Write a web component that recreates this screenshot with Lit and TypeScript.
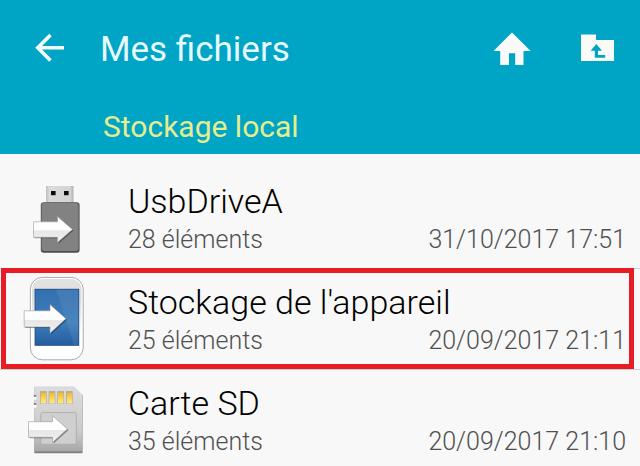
import { LitElement, html, css, svg } from "lit";
import { customElement } from "lit/decorators.js";
import { classMap } from "lit/directives/class-map.js";

const arrow = (d: string) => svg`
  <path d=${d} transform="translate(1 1)" fill="#000" opacity="0.4"></path>
  <path d=${d} fill="url(#arrow)" stroke="#9a9a9a" stroke-width="0.6"></path>`;

const arrowFill = svg`
  <linearGradient id="arrow" x1="0" y1="0" x2="0" y2="1">
    <stop offset="0" stop-color="#fff"></stop>
    <stop offset="0.52" stop-color="#fdfdfd"></stop>
    <stop offset="0.56" stop-color="#e6e6e6"></stop>
    <stop offset="1" stop-color="#f4f4f4"></stop>
  </linearGradient>`;

const usbIcon = html`
  <svg class="icon" viewBox="0 0 100 100" aria-hidden="true">
    <defs>
      ${arrowFill}
      <linearGradient id="plug"><stop offset="0" stop-color="#bdbdbd"></stop><stop offset="0.12" stop-color="#dadada"></stop><stop offset="0.88" stop-color="#d4d4d4"></stop><stop offset="1" stop-color="#b0b0b0"></stop></linearGradient>
    </defs>
    <rect x="46" y="18" width="27.5" height="18" fill="url(#plug)"></rect>
    <rect x="51" y="23" width="4.6" height="4.2" fill="#0c0c0c"></rect>
    <rect x="64" y="23" width="4.6" height="4.2" fill="#0c0c0c"></rect>
    <rect x="40.8" y="34.3" width="38.8" height="50.4" rx="3" fill="#4e4e4e"></rect>
    <rect x="41.6" y="35" width="37" height="48" rx="2.4" fill="#828282"></rect>
    ${arrow("M33.5 53.8H57.5V48.5L72.5 61.5L57.5 74.5V69.3H33.5Z")}
  </svg>`;

const phoneIcon = html`
  <svg class="icon" viewBox="0 0 100 100" aria-hidden="true">
    <defs>
      ${arrowFill}
      <linearGradient id="screen" x1="0" y1="0" x2="0" y2="1"><stop offset="0" stop-color="#3470b0"></stop><stop offset="0.6" stop-color="#3d7cba"></stop><stop offset="1" stop-color="#255d9f"></stop></linearGradient>
      <linearGradient id="shell" x1="0" y1="0" x2="0" y2="1"><stop offset="0" stop-color="#e2e2e2"></stop><stop offset="0.25" stop-color="#dedede"></stop><stop offset="0.7" stop-color="#fff"></stop></linearGradient>
    </defs>
    <rect x="30.4" y="8.4" width="52.8" height="82.4" rx="12" fill="#fff" stroke="#a2a2a2" stroke-width="0.9"></rect>
    <rect x="32" y="10" width="49.6" height="79" rx="10.5" fill="url(#shell)"></rect>
    <rect x="34.6" y="19.8" width="44.6" height="57" fill="#1e4c86"></rect>
    <rect x="35.4" y="20.6" width="43" height="55.4" fill="url(#screen)"></rect>
    <path d="M56 20.6H78.4V76H74Z" fill="#fff" opacity="0.07"></path>
    ${arrow("M24.2 41.8H50V35.5L66 49.7L50 64.3V58H24.2Z")}
  </svg>`;

const cardIcon = html`
  <svg class="icon" viewBox="0 0 100 100" aria-hidden="true">
    <defs>
      ${arrowFill}
      <linearGradient id="card" x1="0" y1="0" x2="0" y2="1"><stop offset="0" stop-color="#dcdcdc"></stop><stop offset="0.7" stop-color="#cacaca"></stop><stop offset="1" stop-color="#a6a6a6"></stop></linearGradient>
      <linearGradient id="gold" x1="0" y1="0" x2="0" y2="1"><stop offset="0" stop-color="#e9b93c"></stop><stop offset="0.5" stop-color="#fbd34f"></stop><stop offset="1" stop-color="#ffe896"></stop></linearGradient>
    </defs>
    <path d="M34.4 17.5H74.5L82.5 25.5V83.2H34.4Z" fill="#7d7d7d"></path>
    <path d="M34.2 16.2H74L82.2 24.6V81.6H34.2Z" fill="url(#card)"></path>
    <rect x="33.8" y="25.3" width="2.4" height="1.4" fill="#555"></rect>
    <rect x="33.8" y="33.4" width="2.4" height="1.4" fill="#555"></rect>
    <rect x="33.6" y="26.7" width="2.8" height="2.8" fill="#fff"></rect>
    <rect x="33.6" y="34.8" width="2.8" height="2.8" fill="#fff"></rect>
    ${[40, 48.7, 57.4, 66].map(
      (x) => svg`
        <rect x=${x} y="21.2" width="6.6" height="12.8" fill="#a3a3a3"></rect>
        <rect x=${x + 0.6} y="22.4" width="5.6" height="11.2" fill="url(#gold)"></rect>`
    )}
    <rect x="40.8" y="42.5" width="35.6" height="31.8" rx="2" fill="#cfcfcf" stroke="#a8a8a8" stroke-width="0.8"></rect>
    ${arrow("M28.5 51.7H52.5V45.6L67.5 59L52.5 72.5V67.3H28.5Z")}
  </svg>`;

const entries = [
  { name: "UsbDriveA", count: "28 éléments", date: "31/10/2017 17:51", icon: usbIcon, marked: false },
  { name: "Stockage de l'appareil", count: "25 éléments", date: "20/09/2017 21:11", icon: phoneIcon, marked: true },
  { name: "Carte SD", count: "35 éléments", date: "20/09/2017 21:10", icon: cardIcon, marked: false },
];

@customElement("app-root")
export class AppRoot extends LitElement {
  static styles = css`
    :host {
      display: block;
      min-height: 100vh;
      background: #f8f8f8;
      font-family: Roboto, "Liberation Sans", sans-serif;
      color: #000;
    }
    button {
      border: 0;
      padding: 0;
      background: none;
      font: inherit;
      color: inherit;
      cursor: pointer;
    }
    header {
      background: #00a4c5;
    }
    .bar {
      display: flex;
      align-items: center;
      height: 98px;
      padding: 0 20px 0 30px;
    }
    .tool {
      display: block;
      width: 40px;
      height: 40px;
    }
    .tool svg {
      display: block;
      width: 40px;
      height: 40px;
    }
    .actions {
      display: flex;
      gap: 46px;
      margin-left: auto;
    }
    h1 {
      margin: 0 0 0 30px;
      padding-top: 2px;
      font-size: 35px;
      line-height: 42px;
      font-weight: 400;
      color: #e6fbff;
    }
    h2 {
      margin: 0;
      padding: 2px 103px 0;
      font-size: 30px;
      line-height: 54px;
      font-weight: 400;
      color: #e6ed8e;
    }
    ul {
      margin: 0;
      padding: 14px 0 0;
      list-style: none;
    }
    li {
      position: relative;
      border-bottom: 1px solid #cfcfcf;
    }
    li:last-child {
      border-bottom: 0;
    }
    .row {
      display: grid;
      grid-template-columns: 128px 1fr;
      width: 100%;
      height: 100px;
      text-align: left;
    }
    li:last-child .row {
      height: 96px;
    }
    .icon {
      width: 100px;
      height: 100px;
    }
    .text {
      padding: 11px 14px 0 0;
      align-self: start;
    }
    .name {
      display: block;
      font-size: 34px;
      line-height: 44px;
      font-weight: 300;
    }
    .meta {
      display: flex;
      justify-content: space-between;
      font-size: 25px;
      line-height: 34px;
      font-weight: 300;
      color: #505050;
    }
    .marked::after {
      content: "";
      position: absolute;
      inset: -1px 6px 0 1px;
      border: 5px solid #e81c24;
      pointer-events: none;
    }
  `;

  render() {
    return html`
      <header>
        <div class="bar">
          <button class="tool" aria-label="Retour">
            <svg viewBox="0 0 40 40" aria-hidden="true">
              <path d="M20.5 6L7.8 18.8L20.5 31.6M8 18.8H34" fill="none" stroke="#f2fdff" stroke-width="3.6"></path>
            </svg>
          </button>
          <h1>Mes fichiers</h1>
          <div class="actions">
            <button class="tool" aria-label="Accueil">
              <svg viewBox="0 0 40 40" aria-hidden="true">
                <path d="M18 3.5L36.6 22H29.5V36H21.2V24.3H15V36H6.2V22H-0.4Z" fill="#fafafa"></path>
              </svg>
            </button>
            <button class="tool" aria-label="Dossier parent">
              <svg viewBox="0 0 40 40" aria-hidden="true">
                <path d="M1 5.5H16V11H34V32H1Z" fill="#fafafa"></path>
                <path d="M16.3 15L22 21.8H18V26H25.2V28.8H14.8V21.8H10.6Z" fill="#00a4c5"></path>
              </svg>
            </button>
          </div>
        </div>
        <h2>Stockage local</h2>
      </header>
      <ul>
        ${entries.map(
          (e) => html`
            <li class=${classMap({ marked: e.marked })}>
              <button class="row">
                ${e.icon}
                <span class="text">
                  <span class="name">${e.name}</span>
                  <span class="meta"><span>${e.count}</span><span>${e.date}</span></span>
                </span>
              </button>
            </li>`
        )}
      </ul>
    `;
  }
}
